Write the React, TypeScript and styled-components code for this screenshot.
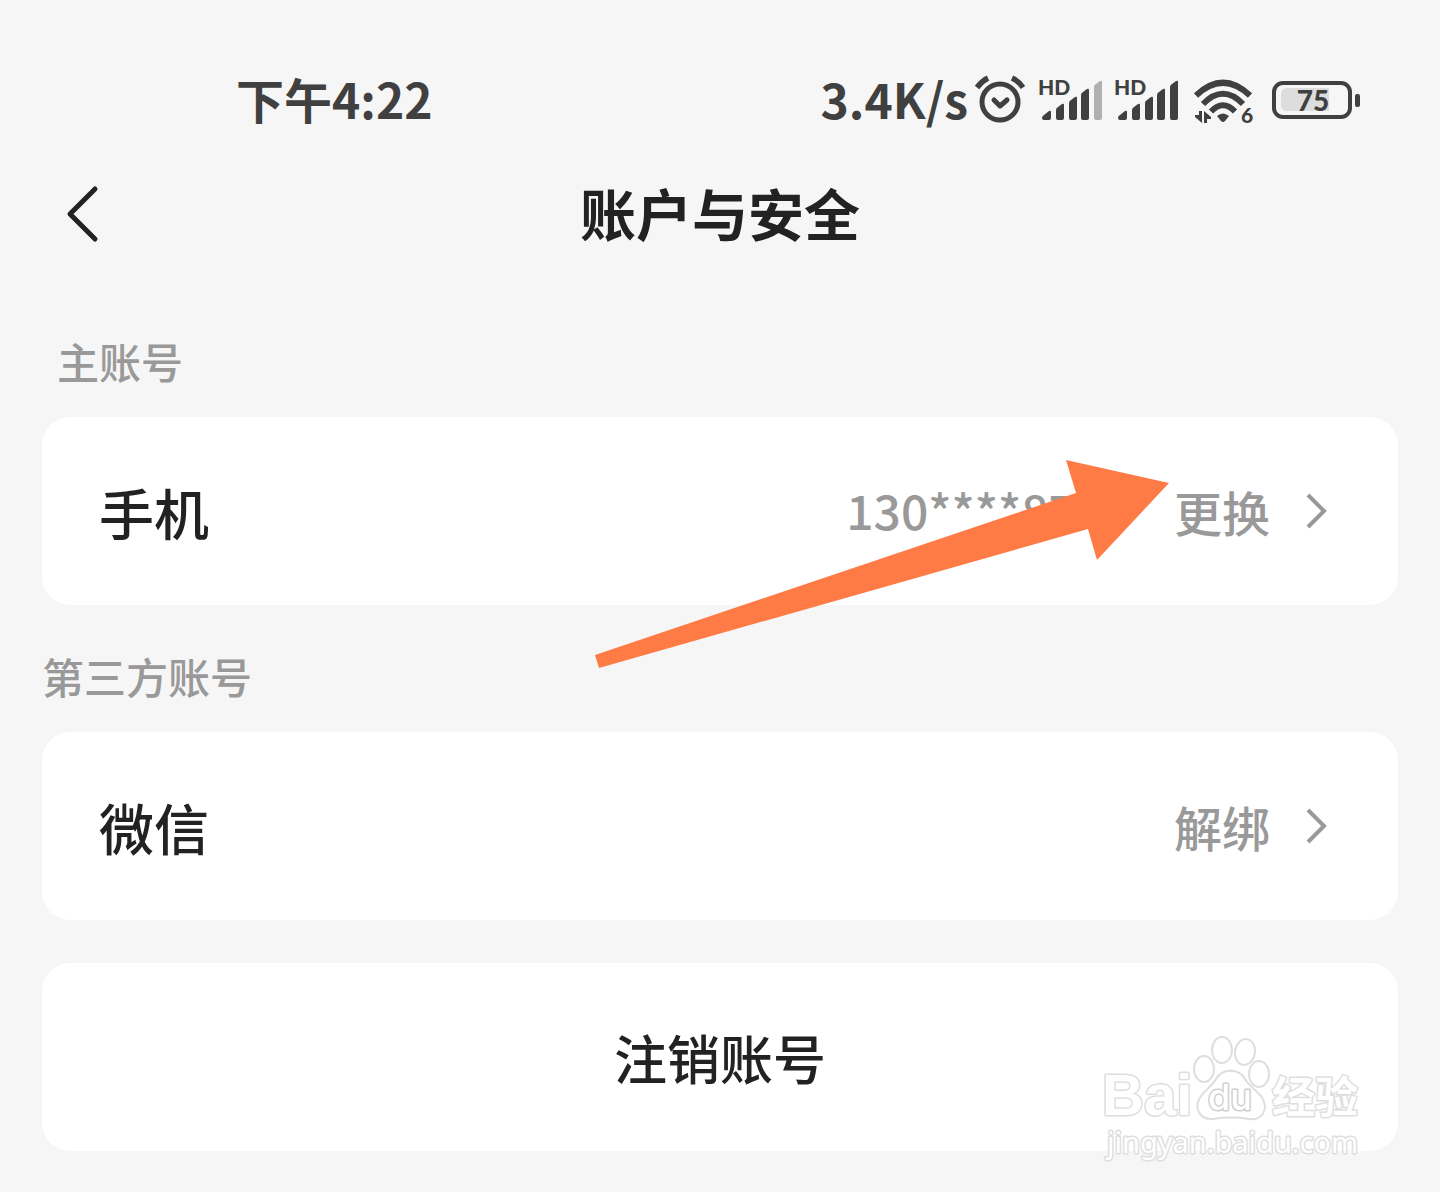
import React from "react";
import styled, { createGlobalStyle } from "styled-components";

const GlobalStyle = createGlobalStyle`
  * { box-sizing: border-box; }
  body {
    margin: 0;
    background: #f6f6f6;
    color: #222;
    font-family: "Noto Sans CJK SC", sans-serif;
  }
  button {
    margin: 0;
    padding: 0;
    border: 0;
    background: none;
    color: inherit;
    font: inherit;
    cursor: pointer;
  }
`;

const Page = styled.div`
  display: flex;
  flex-direction: column;
  min-height: 100vh;
  padding: 0 42px 40px;
`;

const StatusBar = styled.header`
  display: flex;
  align-items: center;
  justify-content: space-between;
  padding: 62px 38px 0 194px;
  height: 138px;
  color: #404040;
  font-size: 48px;
  line-height: 72px;
  font-weight: 700;
  white-space: nowrap;
`;

const Clock = styled.time`
  padding-bottom: 4px;
`;

const NetworkSpeed = styled.span`
  padding: 0 6px 4px 0;
`;

const StatusIcons = styled.div`
  display: flex;
  align-items: center;

  svg { display: block; flex: none; }
`;

const NavBar = styled.nav`
  display: grid;
  grid-template-columns: 80px 1fr 80px;
  align-items: center;
  height: 152px;
`;

const BackButton = styled.button`
  display: flex;
  align-items: center;
  height: 80px;
  padding-left: 22px;
`;

const Title = styled.h1`
  margin: 0;
  padding-bottom: 4px;
  text-align: center;
  font-size: 56px;
  line-height: 80px;
  font-weight: 700;
`;

const SectionLabel = styled.h2<{ $indent?: boolean }>`
  margin: 0;
  padding: 44px 0 29px ${(p) => (p.$indent ? 15 : 0)}px;
  color: #999;
  font-size: 42px;
  line-height: 54px;
  font-weight: 500;
`;

const Card = styled.section`
  position: relative;
  display: flex;
  align-items: center;
  min-height: 188px;
  padding: 0 70px 0 57px;
  border-radius: 28px;
  background: #fff;
`;

const RowName = styled.span`
  flex: 1;
  font-size: 55px;
  line-height: 80px;
  font-weight: 500;
`;

const PhoneNumber = styled.span`
  margin-right: 98px;
  padding-bottom: 4px;
  color: #999;
  font-size: 48px;
  line-height: 72px;
  font-weight: 500;
`;

const RowAction = styled.button`
  display: flex;
  align-items: center;
  gap: 34px;
  color: #999;
  font-size: 48px;
  line-height: 72px;
  font-weight: 500;
`;

const CloseCard = styled(Card)`
  margin-top: 43px;
  padding: 0;
`;

const CloseButton = styled.button`
  flex: 1;
  height: 188px;
  font-size: 53px;
  line-height: 80px;
  font-weight: 500;
`;

const PointerArrow = styled.svg`
  position: absolute;
  top: 43px;
  right: 229px;
  pointer-events: none;
`;

const Watermark = styled.svg`
  position: absolute;
  right: 28px;
  bottom: -16px;
  pointer-events: none;
`;

const AlarmIcon = () => (
  <svg width="52" height="52" viewBox="0 0 52 52" fill="none" stroke="#404040" strokeLinecap="round" strokeLinejoin="round" aria-hidden="true">
    <circle cx="26" cy="28" r="18" strokeWidth="5" />
    <path d="M20 26l6 6 7-6" strokeWidth="5" />
    <path d="M3 13.500Q8 7 14 4M38 4Q44.500 7 49 13.500" strokeWidth="5.500" strokeLinecap="butt" />
  </svg>
);

const SignalIcon = ({ weak = false }: { weak?: boolean }) => (
  <svg width="76" height="52" viewBox="0 0 76 52" fill="#404040" role="img" aria-label="HD">
    <text x="12" y="21" fontFamily="Lato" fontSize="21" fontWeight="900">HD</text>
    <g transform="translate(2 0)">
      <path d="M14 44q0-2 2-3l5-4q2-1 2 1v6q0 2-2 2h-5q-2 0-2-2z" />
      <path d="M28 36q0-2 2-3l4-3q2-1 2 1v13q0 2-2 2h-4q-2 0-2-2z" />
      <path d="M41 29q0-2 2-3l4-3q2-1 2 1v20q0 2-2 2h-4q-2 0-2-2z" />
      <path d="M53 21q0-2 2-3l4-3q2-1 2 1v28q0 2-2 2h-4q-2 0-2-2z" />
      <path d="M66 13q0-2 2-3l4-3q2-1 2 1v36q0 2-2 2h-4q-2 0-2-2z" fill={weak ? "#b0b0b0" : "#404040"} />
    </g>
  </svg>
);

const WifiIcon = () => (
  <svg width="76" height="52" viewBox="0 0 76 52" fill="none" stroke="#404040" aria-label="WiFi 6" role="img">
    <path d="M18 21.500Q45-4 72 21.500" strokeWidth="6" />
    <path d="M25 30Q45 9.500 65 30" strokeWidth="6" />
    <path d="M33 37.500Q45 25 57 37.500" strokeWidth="6" />
    <path d="M39 42q6-5 12 0l-4 5q-2 2-4 0z" fill="#404040" stroke="none" />
    <path d="M21 37h3v12l-7-6v-2h4zM26 49V37l7 6v2h-4v4z" fill="#404040" stroke="none" />
    <text x="63" y="49" fill="#404040" stroke="none" fontFamily="Lato" fontSize="21" fontWeight="900">6</text>
  </svg>
);

const BatteryIcon = () => (
  <svg width="106" height="52" viewBox="0 0 106 52" role="img" aria-label="75">
    <rect x="20" y="9" width="76" height="34" rx="9" fill="none" stroke="#404040" strokeWidth="4" />
    <path d="M33 14h42v23H33q-6 0-6-6V20q0-6 6-6z" fill="#ddd" />
    <rect x="101" y="20" width="5" height="13" rx="2" fill="#404040" />
    <text x="59" y="37" textAnchor="middle" fill="#404040" fontFamily="Lato" fontSize="28" fontWeight="900">75</text>
  </svg>
);

const ChevronRight = () => (
  <svg width="24" height="36" viewBox="0 0 24 36" fill="none" stroke="#999" strokeWidth="4" aria-hidden="true">
    <path d="M4 2l16 16L4 34" />
  </svg>
);

const BaiduWatermark = () => (
  <Watermark width="270" height="136" viewBox="0 0 270 136" role="img" aria-label="Baidu 经验" fill="#fff" stroke="#dedede" strokeWidth="2" strokeLinejoin="round">
    <text x="2" y="84" fontFamily="Liberation Sans" fontSize="58" fontWeight="700" strokeWidth="3" paintOrder="stroke">Bai</text>
    <ellipse cx="104" cy="38" rx="10" ry="13" />
    <ellipse cx="122" cy="19" rx="10" ry="13" />
    <ellipse cx="145" cy="21" rx="10" ry="13" transform="rotate(10 145 21)" />
    <ellipse cx="159" cy="43" rx="10" ry="13" />
    <path d="M116 48c6-11 23-11 29 0 4 7 10 10 16 17 9 13 1 25-12 23-13-2-23-2-36 0-14 1-20-12-12-23 5-7 11-10 15-17z" />
    <text x="108" y="79" fontFamily="Inter" fontSize="36" fontWeight="500" stroke="#cfcfcf" strokeWidth="3" paintOrder="stroke">du</text>
    <text x="172" y="82" fontFamily="Noto Sans CJK SC" fontSize="43" fontWeight="700" strokeWidth="3" paintOrder="stroke">经验</text>
    <text x="7" y="122" fontFamily="Noto Sans" fontSize="29" strokeWidth="3" paintOrder="stroke">jingyan.baidu.com</text>
  </Watermark>
);

export default function App() {
  return (
    <>
      <GlobalStyle />
      <Page>
        <StatusBar>
          <Clock>下午4:22</Clock>
          <StatusIcons>
            <NetworkSpeed>3.4K/s</NetworkSpeed>
            <AlarmIcon />
            <SignalIcon weak />
            <SignalIcon />
            <WifiIcon />
            <BatteryIcon />
          </StatusIcons>
        </StatusBar>
        <NavBar>
          <BackButton type="button" aria-label="返回">
            <svg width="36" height="60" viewBox="0 0 36 60" fill="none" stroke="#222" strokeWidth="5" strokeLinecap="round" strokeLinejoin="round">
              <path d="M31 5L6 30l25 25" />
            </svg>
          </BackButton>
          <Title>账户与安全</Title>
        </NavBar>
        <main>
          <SectionLabel $indent>主账号</SectionLabel>
          <Card>
            <RowName>手机</RowName>
            <PhoneNumber>130****87</PhoneNumber>
            <RowAction type="button">
              更换
              <ChevronRight />
            </RowAction>
            <PointerArrow width="574" height="208" viewBox="0 0 574 208" fill="#ff7b45" aria-hidden="true">
              <path d="M574 23L471 0l10 33L0 195l4 13 489-139 9 31z" />
            </PointerArrow>
          </Card>
          <SectionLabel>第三方账号</SectionLabel>
          <Card>
            <RowName>微信</RowName>
            <RowAction type="button">
              解绑
              <ChevronRight />
            </RowAction>
          </Card>
          <CloseCard>
            <CloseButton type="button">注销账号</CloseButton>
            <BaiduWatermark />
          </CloseCard>
        </main>
      </Page>
    </>
  );
}
